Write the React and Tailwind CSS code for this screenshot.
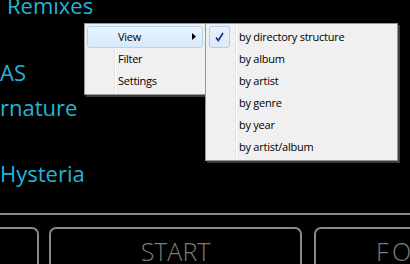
// App.jsx
import React from 'react';

const MenuItem = ({ label, active, arrow }) => (
  <div className="relative h-[22px] flex items-center">
    {active && (
      <div className="absolute inset-y-0 left-0 right-0 rounded-[3px] border border-[#b0d4f1] bg-gradient-to-b from-[#ebf4fd] to-[#d7e9f9]" />
    )}
    <span className="relative pl-[31px] text-[11px] tracking-[-0.25px] text-black">{label}</span>
    {arrow && (
      <svg className="absolute right-[7px] top-[7px]" width="4" height="7" viewBox="0 0 4 7">
        <path d="M0 0 L4 3.5 L0 7 Z" fill="#000" />
      </svg>
    )}
  </div>
);

const SubItem = ({ label, checked }) => (
  <div className="relative h-[22px] flex items-center">
    {checked && (
      <div className="absolute left-[1px] top-0 w-[21px] h-[22px] rounded-[3px] border border-[#aecff2] bg-gradient-to-b from-[#eaf2fb] to-[#dbe9f8] flex items-center justify-center">
        <svg width="9" height="10" viewBox="0 0 9 10">
          <path d="M1 5.5 L3.3 8.5 L8 1" stroke="#16278c" strokeWidth="1.6" fill="none" />
        </svg>
      </div>
    )}
    <span className="relative pl-[31px] text-[11px] tracking-[-0.25px] text-black">{label}</span>
  </div>
);

const App = () => {
  const views = ['by directory structure', 'by album', 'by artist', 'by genre', 'by year', 'by artist/album'];

  return (
    <div
      className="relative w-[410px] h-[264px] bg-black overflow-hidden"
      style={{ fontFamily: '"Open Sans", "Noto Sans", sans-serif' }}
    >
      {/* Track list behind */}
      <div className="flex flex-col text-[22px] leading-none text-[#25b4d7]">
        <div className="pl-[7px] mt-[-6px]">Remixes</div>
        <div className="mt-[45px]">AS</div>
        <div className="mt-[13px]">rnature</div>
        <div className="mt-[44px]">Hysteria</div>
      </div>

      {/* Bottom bar */}
      <div className="absolute left-0 right-0 top-[213px]">
        <div className="h-[2px] bg-[#8a8a8a]" />
        <div className="flex gap-[10px] ml-[-213px] mt-[12px]">
          <div className="w-[252px] h-[60px] shrink-0 rounded-t-[7px] border-2 border-b-0 border-[#8a8a8a]" />
          <div className="w-[253px] h-[60px] shrink-0 rounded-t-[7px] border-2 border-b-0 border-[#8a8a8a] flex justify-center pt-[10px]">
            <span className="text-[25px] font-light leading-none text-[#7c7c7c]">START</span>
          </div>
          <div className="w-[253px] h-[60px] shrink-0 ml-[2px] rounded-t-[7px] border-2 border-b-0 border-[#8a8a8a] flex justify-center pt-[10px]">
            <span className="text-[25px] font-light leading-none text-[#7c7c7c] tracking-[3.5px]">FOLDERS</span>
          </div>
        </div>
      </div>

      {/* Context menu */}
      <div className="absolute left-[84px] top-[23px] w-[122px] border border-[#979797] bg-[#f0f0f0] p-[2px] shadow-[2px_2px_0_#3c3c3c]">
        <div className="absolute left-[29px] top-[2px] bottom-[2px] w-[2px] border-l border-[#e2e3e3] border-r border-r-white" />
        <MenuItem label="View" active arrow />
        <MenuItem label="Filter" />
        <MenuItem label="Settings" />
      </div>

      {/* Submenu */}
      <div className="absolute left-[205px] top-[23px] w-[193px] border border-[#979797] bg-[#f0f0f0] p-[2px] shadow-[2px_2px_0_#3c3c3c]">
        <div className="absolute left-[29px] top-[2px] bottom-[2px] w-[2px] border-l border-[#e2e3e3] border-r border-r-white" />
        {views.map((v, i) => (
          <SubItem key={v} label={v} checked={i === 0} />
        ))}
      </div>
    </div>
  );
};

export default App;
